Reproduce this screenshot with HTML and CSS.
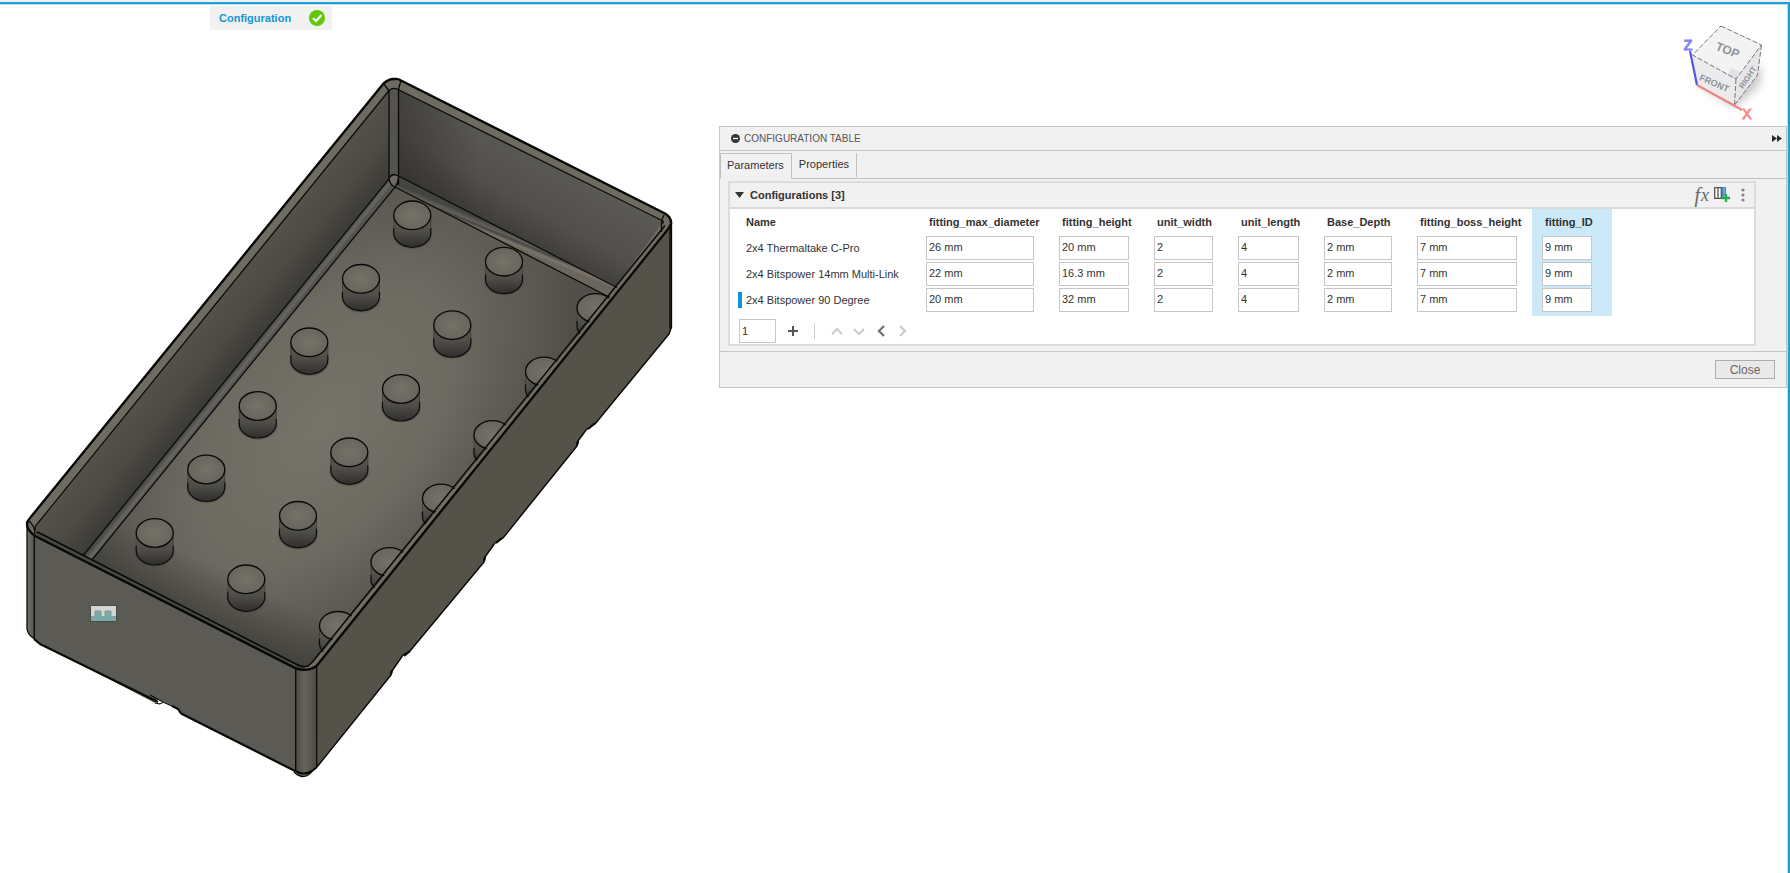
FILE: index.html
```html
<!DOCTYPE html>
<html lang="en">
<head>
<meta charset="utf-8">
<title>Configuration Table</title>
<link rel="stylesheet" href="styles.css">
</head>
<body>
<main class="viewport">
  <svg class="model" viewBox="0 3 700 796" role="img" aria-label="2x4 bin model">
    <defs>
      <linearGradient id="wallLeft" gradientUnits="userSpaceOnUse" x1="190" y1="325" x2="243" y2="368">
        <stop offset="0" stop-color="#56534b"/><stop offset=".5" stop-color="#4c4a44"/><stop offset="1" stop-color="#383733"/>
      </linearGradient>
      <linearGradient id="wallBack" gradientUnits="userSpaceOnUse" x1="535" y1="155" x2="490" y2="235">
        <stop offset="0" stop-color="#595853"/><stop offset=".5" stop-color="#51504c"/><stop offset="1" stop-color="#383735"/>
      </linearGradient>
      <linearGradient id="shadeBack" gradientUnits="userSpaceOnUse" x1="398" y1="0" x2="480" y2="0">
        <stop offset="0" stop-color="#2e2d2b" stop-opacity=".5"/><stop offset="1" stop-color="#2e2d2b" stop-opacity="0"/>
      </linearGradient>
      <radialGradient id="floor" gradientUnits="userSpaceOnUse" cx="0" cy="0" r="1" gradientTransform="translate(322 425) rotate(-51) scale(330 190)">
        <stop offset="0" stop-color="#76736a"/><stop offset=".5" stop-color="#6d6a62"/><stop offset="1" stop-color="#514f49"/>
      </radialGradient>
      <linearGradient id="floorFront" gradientUnits="userSpaceOnUse" x1="190" y1="608" x2="212" y2="564">
        <stop offset="0" stop-color="#373632" stop-opacity=".6"/><stop offset="1" stop-color="#373632" stop-opacity="0"/>
      </linearGradient>
      <linearGradient id="fillet" gradientUnits="userSpaceOnUse" x1="270" y1="325" x2="280" y2="333">
        <stop offset="0" stop-color="#4c4b48"/><stop offset=".35" stop-color="#686764"/><stop offset=".6" stop-color="#52514d"/><stop offset="1" stop-color="#65625a"/>
      </linearGradient>
      <linearGradient id="filletBack" gradientUnits="userSpaceOnUse" x1="504" y1="228" x2="499" y2="240">
        <stop offset="0" stop-color="#454442"/><stop offset=".35" stop-color="#62615d"/><stop offset=".5" stop-color="#464541"/><stop offset=".75" stop-color="#7b756b"/><stop offset="1" stop-color="#6b665d"/>
      </linearGradient>
      <linearGradient id="cornerFront" x1="0" x2="1" y1="0" y2="0">
        <stop offset="0" stop-color="#4b4a45"/><stop offset=".45" stop-color="#66645c"/><stop offset="1" stop-color="#4d4a42"/>
      </linearGradient>
      <linearGradient id="cornerLeft" x1="0" x2="1" y1="0" y2="0">
        <stop offset="0" stop-color="#73716a"/><stop offset="1" stop-color="#54534e"/>
      </linearGradient>
      <linearGradient id="pegSide" x1="0" x2="0" y1="0" y2="1">
        <stop offset="0" stop-color="#5a5852"/><stop offset=".5" stop-color="#4f4e49"/><stop offset="1" stop-color="#302f2d"/>
      </linearGradient>
      <radialGradient id="pegTop">
        <stop offset="0" stop-color="#75726a"/><stop offset="1" stop-color="#68655d"/>
      </radialGradient>
      <g id="peg">
        <ellipse cy="19" rx="20" ry="15" fill="#46443f" opacity=".35"/>
        <path d="M-18.5 0V17A18.5 14.500 0 0 0 18.500 17V0Z" fill="url(#pegSide)"/>
        <path d="M-18.500 0V14M18.500 0V14" stroke="#44423e" fill="none"/>
        <path d="M-18.500 13V17.500A18.500 14.500 0 0 0 18.500 17.500V13" stroke="#0b0b0a" stroke-width="1.200" fill="none"/>
        <ellipse rx="18.500" ry="14.300" fill="url(#pegTop)" stroke="#090908" stroke-width="1.300"/>
      </g>
    </defs>

    <!-- rim -->
    <path d="M27 526Q27 520 30 517L383.500 82.500Q389 77 394.500 77.500Q398 77.500 401 79.500L665 212.500Q671 216 671.500 221.500L670 230L317 666L296 669L34 536Z" fill="#6e6b62"/>
    <!-- inner walls and floor -->
    <path d="M36 526L389 90V178L82 556L38 533Z" fill="url(#wallLeft)"/>
    <path d="M398 88L663 221L616 286L398 175Z" fill="url(#wallBack)"/>
    <path d="M398 88L480 129V217L398 175Z" fill="url(#shadeBack)"/>
    <path d="M389 90Q393 86 398.500 89V175L395 174L389 178Z" fill="#55534d"/>
    <path d="M395 186L610 296L640 265L312 662L302 667L91 560Z" fill="url(#floor)"/>
    <path d="M150 490L360 590L312 662L302 667L91 560Z" fill="url(#floorFront)"/>
    <path d="M389 178L395 186L91 560L82 556Z" fill="url(#fillet)"/>
    <path d="M398.500 175L617 286L610 296L395 186Z" fill="url(#filletBack)"/>

    <g id="pegs">
      <use href="#peg" x="412.300" y="214.300"/><use href="#peg" x="361" y="277.800"/><use href="#peg" x="309.300" y="341.300"/>
      <use href="#peg" x="257.700" y="405"/><use href="#peg" x="206.300" y="468.500"/><use href="#peg" x="154.700" y="532"/>
      <use href="#peg" x="504" y="260.700"/><use href="#peg" x="452.300" y="324.200"/><use href="#peg" x="401" y="388"/>
      <use href="#peg" x="349.300" y="451.300"/><use href="#peg" x="298" y="514.800"/><use href="#peg" x="246.300" y="578.300"/>
      <use href="#peg" x="595.500" y="307"/><use href="#peg" x="544" y="370.500"/><use href="#peg" x="492.500" y="434"/>
      <use href="#peg" x="441" y="497.500"/><use href="#peg" x="389.500" y="561"/><use href="#peg" x="338" y="624.800"/>
    </g>

    <g fill="none" stroke="#0a0a09" stroke-width="1.300">
      <path d="M36 529Q34 527 36 524.500L389 89.500Q393 86 398 88.500L662 219.500Q665 221 661.500 223V231"/>
      <path d="M389 89V178M398.500 88V184M82 556L389 178Q390 174 394 173.500L398.500 175L617 286.500M91 560L395 186L610 296.500M389 176Q389 184 395 186Q398.500 182 398.500 175"/>
      <path d="M383.500 82.500L389 90M401 79.500L398.500 88M664 214Q662 217 661.500 222M29 520Q35 525 35 533"/>
    </g>

    <!-- outer faces -->
    <path d="M316.500 665L669 226.500L671.500 221V327L669 333L595 423L586 429L578 440L577 445L503 537L495 542L485 556L484 561L410 650L403 654L392 670L391 674L317 766Z" fill="#55524a"/>
    <path d="M34 534L296 668V770L181 712.500L177 707L158 698L155 702L38 641L34 638Z" fill="#5b5a55"/>
    <path d="M27 524Q30 531 34.500 534V638Q27 634 27 627Z" fill="url(#cornerLeft)"/>
    <path d="M295.700 668Q307 672 316.500 664V766Q309 776 303.500 775.500Q299 776 295.700 771Z" fill="url(#cornerFront)"/>
    <path d="M313 663L340 629.500L573.500 340.500L667 226L670 228L316 666Z" fill="#726f66"/>
    <path d="M37 531L300 664.500L306 668L296 669L34 535Z" fill="#4a4842"/>

    <g fill="none" stroke="#080807" stroke-linejoin="round">
      <path stroke-width="2.400" d="M34 534Q27 529 27 523Q27 520 30 517L383.500 82.500Q389 77.500 394.500 78Q398 77.500 401 79.500L665 212.500Q671 216 671.200 222Q670 226 667 229.500L316.500 665Q308 671 296 667.500L34 534.500"/>
      <path stroke-width="1.500" d="M36.500 530.500L297 663.500Q303 667 308 665L312 661.500L665 224.500"/>
      <path stroke-width="1.300" d="M27 523V628Q28 634 34 637.500M34.300 534V638M295.700 668V770M316.700 665V766M670 226V328M671.500 222V327"/>
      <path stroke-width="1.400" d="M671.500 326L669 333L595 423L586 429L578 440L577 445L503 537L495 542L485 556L484 561L410 650L403 654L392 670L391 674L317 766"/>
      <path stroke-width="2.200" d="M34 638L40 643L150 697L158 701M181 712.500L295 770Q304 775 312 770L317 766M172 705L178 708L181 712.500M595 422L588 428M578 440L577 444M502 537L496 542M485 556L484 560M410 650L404 655M392 669L391 673"/>
      <path stroke-width="1.200" d="M150 694L163 701Q161 704 155 702M163 701L174 706M294 771Q299 776 304 775.500Q309 775 312 770"/>
    </g>

    <!-- joint-origin marker -->
    <g>
      <path d="M90.500 604.500H116.500V620.500H90.500Z" fill="#d5d5d3" stroke="#4b4a47"/>
      <path d="M91 615H95V610H101V615H105V610H111V615H116V620H91Z" fill="#78aaab"/>
      <path d="M95 615V610H101V615M105 615V610H111V615" fill="none" stroke="#8b9290"/>
    </g>
  </svg>

  <div class="config-tag">
    <span>Configuration</span>
    <svg width="16" height="16" viewBox="0 0 16 16" aria-hidden="true"><circle cx="8" cy="8" r="8" fill="#64c80a"/><path d="M4 8.300L7 11L12.500 5" fill="none" stroke="#fff" stroke-width="2.200"/></svg>
  </div>

  <svg class="view-cube" width="100" height="114" viewBox="1675 10 100 114" role="img" aria-label="View cube">
    <defs>
      <filter id="soft" x="-30%" y="-30%" width="160%" height="160%"><feGaussianBlur stdDeviation="5"/></filter>
    </defs>
    <path d="M1692 80L1735 107L1760 84L1761 64L1735 90Z" fill="#888" opacity=".5" filter="url(#soft)"/>
    <path d="M1721 26L1761.500 45L1736 79L1692.500 55Z" fill="#f3f3f4"/>
    <path d="M1692.500 55L1736 79L1734.500 105L1697 85Z" fill="#ebebed"/>
    <path d="M1736 79L1761.500 45L1757.500 75L1734.500 105Z" fill="#e6e6e8"/>
    <path d="M1731 68L1740 72L1736 79L1727 75Z" fill="#e0e2e5"/>
    <path d="M1721 26L1761.500 45L1736 79L1692.500 55ZM1736 79L1734.500 105L1697 85M1761.500 45L1757.500 75L1734.500 105" fill="none" stroke="#777" stroke-dasharray="5 2"/>
    <path d="M1690 51L1697 85" stroke="#5554e8" stroke-width="2.200"/>
    <path d="M1697 85L1742 110" stroke="#ed8585" stroke-width="2.200"/>
    <g class="cube-text" text-anchor="middle">
      <text class="face-top" transform="translate(1726 54) rotate(22)">TOP</text>
      <text class="face" transform="translate(1713 86) rotate(24)">FRONT</text>
      <text class="face-side" transform="translate(1750 79) rotate(-56)">RIGHT</text>
      <text class="axis-z" x="1688" y="50">Z</text>
      <text class="axis-x" x="1747" y="119">X</text>
    </g>
  </svg>

  <section class="panel" aria-label="Configuration table">
    <header class="panel-head">
      <svg width="9" height="9" viewBox="0 0 9 9" aria-hidden="true"><circle cx="4.500" cy="4.500" r="4.500" fill="#333"/><path d="M2 4.500H7" stroke="#fff" stroke-width="1.400"/></svg>
      <h1>CONFIGURATION TABLE</h1>
      <button class="icon-btn" aria-label="Collapse panel"><svg width="10" height="7" viewBox="0 0 10 7"><path d="M0 0L5 3.500L0 7ZM5 0L10 3.500L5 7Z" fill="#2c2c2c"/></svg></button>
    </header>
    <div class="tabs" role="tablist">
      <button class="tab tab-on" role="tab" aria-selected="true">Parameters</button>
      <button class="tab" role="tab" aria-selected="false">Properties</button>
      <span class="tab-rest"></span>
    </div>
    <div class="group">
      <div class="group-head">
        <svg width="9" height="6" viewBox="0 0 9 6" aria-hidden="true"><path d="M0 0H9L4.500 6Z" fill="#333"/></svg>
        <h2>Configurations [3]</h2>
        <div class="tools">
          <button class="icon-btn fx" aria-label="Parameters"><i class="f">f</i><i>x</i></button>
          <button class="icon-btn" aria-label="Add column"><svg width="16" height="16" viewBox="0 0 16 16"><path d="M.7 .7H7.300V11.300H.7ZM4 1V11" fill="#fff" stroke="#555" stroke-width="1.300"/><path d="M8.500 .500H11.500V7.500H10V9.500H8.500Z" fill="#62aadd" stroke="#4a86b5"/><path d="M12 7V15M8 11H16" stroke="#1eb04c" stroke-width="2.400"/></svg></button>
          <button class="icon-btn dots" aria-label="More options"><svg width="4" height="14" viewBox="0 0 4 14"><g fill="#848484"><circle cx="2" cy="2" r="1.600"/><circle cx="2" cy="7" r="1.600"/><circle cx="2" cy="12" r="1.600"/></g></svg></button>
        </div>
      </div>
      <table class="grid">
        <colgroup><col class="c-name"><col class="c-dia"><col class="c-h"><col class="c-w"><col class="c-l"><col class="c-base"><col class="c-boss"><col class="c-id"><col></colgroup>
        <thead>
          <tr><th>Name</th><th>fitting_max_diameter</th><th>fitting_height</th><th>unit_width</th><th>unit_length</th><th>Base_Depth</th><th>fitting_boss_height</th><th class="sel">fitting_ID</th><th class="rest"></th></tr>
        </thead>
        <tbody>
          <tr><td class="name">2x4 Thermaltake C-Pro</td><td><input aria-label="fitting_max_diameter" value="26 mm"></td><td><input aria-label="fitting_height" value="20 mm"></td><td><input aria-label="unit_width" value="2"></td><td><input aria-label="unit_length" value="4"></td><td><input aria-label="Base_Depth" value="2 mm"></td><td><input aria-label="fitting_boss_height" value="7 mm"></td><td class="sel"><input aria-label="fitting_ID" value="9 mm"></td><td></td></tr>
          <tr><td class="name">2x4 Bitspower 14mm Multi-Link</td><td><input aria-label="fitting_max_diameter" value="22 mm"></td><td><input aria-label="fitting_height" value="16.3 mm"></td><td><input aria-label="unit_width" value="2"></td><td><input aria-label="unit_length" value="4"></td><td><input aria-label="Base_Depth" value="2 mm"></td><td><input aria-label="fitting_boss_height" value="7 mm"></td><td class="sel"><input aria-label="fitting_ID" value="9 mm"></td><td></td></tr>
          <tr class="last"><td class="name active"><span>2x4 Bitspower 90 Degree</span></td><td><input aria-label="fitting_max_diameter" value="20 mm"></td><td><input aria-label="fitting_height" value="32 mm"></td><td><input aria-label="unit_width" value="2"></td><td><input aria-label="unit_length" value="4"></td><td><input aria-label="Base_Depth" value="2 mm"></td><td><input aria-label="fitting_boss_height" value="7 mm"></td><td class="sel"><input aria-label="fitting_ID" value="9 mm"></td><td></td></tr>
        </tbody>
      </table>
      <div class="pager">
        <input class="count" aria-label="Rows to add" value="1">
        <button class="icon-btn add" aria-label="Add row"><svg width="12" height="12" viewBox="0 0 12 12"><path d="M6 1V11M1 6H11" stroke="#555" stroke-width="2"/></svg></button>
        <span class="divider"></span>
        <button class="icon-btn" aria-label="Move up"><svg width="12" height="12" viewBox="0 0 12 12"><path d="M1 9L6 4L11 9" fill="none" stroke="#ccc" stroke-width="2.200"/></svg></button>
        <button class="icon-btn" aria-label="Move down"><svg width="12" height="12" viewBox="0 0 12 12"><path d="M1 4L6 9L11 4" fill="none" stroke="#ccc" stroke-width="2.200"/></svg></button>
        <button class="icon-btn" aria-label="Move left"><svg width="12" height="12" viewBox="0 0 12 12"><path d="M9 1L4 6L9 11" fill="none" stroke="#757575" stroke-width="2.400"/></svg></button>
        <button class="icon-btn" aria-label="Move right"><svg width="12" height="12" viewBox="0 0 12 12"><path d="M3 1L8 6L3 11" fill="none" stroke="#ccc" stroke-width="2.400"/></svg></button>
      </div>
    </div>
    <footer class="panel-foot"><button class="close">Close</button></footer>
  </section>
</main>
</body>
</html>
```

FILE: styles.css
```css
* { box-sizing: border-box; }

body {
  margin: 0;
  padding-top: 2px;
  min-height: 100vh;
  display: flex;
  background: #f0f0f0;
  color: #333;
  font: 11px/16px "Liberation Sans", Arial, sans-serif;
}

button, input { font: inherit; color: inherit; }

h1, h2 { margin: 0; font-size: 11px; line-height: 16px; }

.viewport {
  position: relative;
  flex: 1;
  overflow: hidden;
  background: #fff;
  border-top: 2px solid #219fdb;
  border-right: 2px solid #219fdb;
  box-shadow: inset -1px 1px #b5def3;
}

.model { position: absolute; left: 0; top: 0; width: 700px; }

.config-tag {
  position: absolute;
  left: 210px;
  top: 2px;
  display: flex;
  align-items: center;
  gap: 18px;
  height: 24px;
  padding: 0 7px 0 9px;
  background: #f1f1f1;
  color: #1495d6;
  font-weight: bold;
}

.view-cube { position: absolute; right: 13px; top: 6px; }
.cube-text { font-weight: bold; fill: #8f9398; }
.face-top { font-size: 12px; }
.face { font-size: 9px; }
.face-side { font-size: 8px; }
.axis-z, .axis-x { font-size: 14px; font-weight: normal; }
.axis-z { fill: #8080f4; stroke: #8080f4; }
.axis-x { fill: #f58c8c; stroke: #f58c8c; }

.panel {
  position: absolute;
  left: 719px;
  right: 1px;
  top: 122px;
  background: #f1f1f1;
  border: 1px solid #c6c6c6;
}

.panel-head {
  display: flex;
  align-items: center;
  gap: 4px;
  height: 24px;
  padding: 0 4px 0 11px;
  border-bottom: 1px solid #c6c6c6;
}
.panel-head h1 { flex: 1; font-size: 10px; font-weight: normal; color: #555; }

.icon-btn {
  display: flex;
  align-items: center;
  justify-content: center;
  padding: 0;
  border: 0;
  background: none;
}

.tabs { display: flex; height: 28px; padding-top: 2px; }
.tab {
  padding: 0 8px 4px 7px;
  border: 0;
  border-bottom: 1px solid #c0c0c0;
  background: linear-gradient(#c0c0c0, #c0c0c0) right top / 1px 24px no-repeat;
}
.tab-on {
  padding: 0 7px 4px 6px;
  border: 1px solid #c0c0c0;
  border-bottom: 0;
  background: none;
}
.tab-rest { flex: 1; border-bottom: 1px solid #c0c0c0; }

.group {
  margin: 2px 30px 5px 8px;
  border: 2px solid #dcdcdc;
  background: #fff;
}
.group-head {
  display: flex;
  align-items: center;
  gap: 6px;
  height: 26px;
  padding: 0 5px;
  background: #f1f1f1;
  border-bottom: 2px solid #dadada;
}
.group-head h2 { flex: 1; }
.tools { display: flex; align-items: center; gap: 5px; }
.dots { width: 12px; margin-left: 2px; }
.fx { color: #666; font: 18px/20px "Liberation Serif", serif; }
.fx .f { font-size: 20px; padding-right: 1px; }

.grid {
  width: 100%;
  table-layout: fixed;
  border-collapse: collapse;
}
.c-name { width: 186px; }
.c-dia { width: 133px; }
.c-h { width: 95px; }
.c-w { width: 84px; }
.c-l { width: 86px; }
.c-base { width: 93px; }
.c-boss { width: 125px; }
.c-id { width: 80px; }

th {
  height: 26px;
  padding: 0 0 1px 13px;
  text-align: left;
  white-space: nowrap;
}
td { height: 26px; padding: 0 15px 1px 10px; }
.last td { height: 29px; padding-bottom: 4px; }
th:first-child, td.name { padding-left: 16px; white-space: nowrap; }
td.sel { padding-right: 20px; }
.sel { background: #cbe9f6; }
td.name { padding-right: 0; }
td.active { padding-left: 8px; }
td.active span { display: block; padding-left: 4px; border-left: 4px solid #0c96d8; }

input {
  display: block;
  width: 100%;
  height: 24px;
  padding: 0 2px 1px;
  border: 1px solid #c6c6c6;
  background: #fff;
}

.pager {
  display: flex;
  align-items: center;
  gap: 10px;
  padding: 3px 9px 1px;
}
.pager .count { width: 37px; }
.pager .add { margin: 0 5px 0 1px; }
.divider { width: 1px; height: 16px; margin-right: 6px; background: #ccc; }

.panel-foot {
  display: flex;
  justify-content: flex-end;
  padding: 8px 11px;
  border-top: 1px solid #c6c6c6;
}
.close {
  width: 60px;
  height: 19px;
  padding: 0;
  border: 1px solid #adadad;
  background: #e9e9e9;
  color: #666;
  font-size: 12px;
  line-height: 16px;
}
```
